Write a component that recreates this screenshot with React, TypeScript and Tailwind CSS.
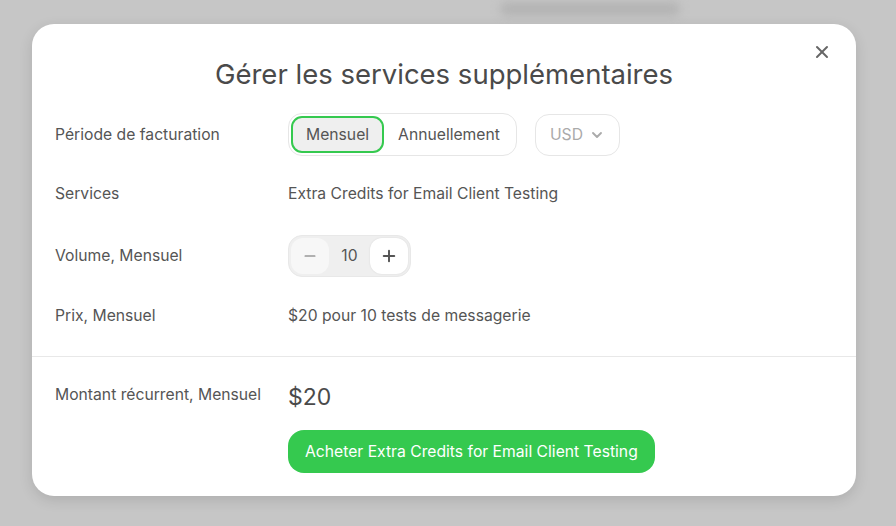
import React, { useState } from 'react';
import { X, ChevronDown, Minus, Plus } from 'lucide-react';

const Row: React.FC<{ label: string; children: React.ReactNode; className?: string }> = ({ label, children, className }) => (
  <div className={`flex items-center ${className ?? ''}`}>
    <div className="w-[233px] shrink-0 text-[15.7px] text-[#555]">{label}</div>
    <div className="flex items-center">{children}</div>
  </div>
);

export default function App() {
  const [period, setPeriod] = useState<'month' | 'year'>('month');
  const [volume, setVolume] = useState(10);

  return (
    <div className="relative h-[526px] w-[896px] overflow-hidden bg-[#c6c6c6]" style={{ fontFamily: 'Inter, "Noto Sans", sans-serif' }}>
      {/* blurred page behind the overlay */}
      <div className="absolute left-[500px] top-[2px] h-[14px] w-[180px] rounded-full bg-[#b4b4b4] blur-[4px]" />

      <div className="absolute left-[32px] top-[24px] h-[472px] w-[824px] rounded-[22px] bg-white shadow-[0_4px_14px_rgba(0,0,0,0.12)]">
        <button className="absolute right-[24px] top-[18px] text-[#666]">
          <X size={20} strokeWidth={2.4} />
        </button>

        <h2 className="pt-[33px] text-center text-[27.5px] leading-[34px] text-[#4a4a4a]">Gérer les services supplémentaires</h2>

        <div className="px-[23px] pt-[22px]">
          <Row label="Période de facturation">
            <div className="flex h-[43px] items-center rounded-[14px] border border-[#e6e6e6] p-[2px]">
              <button
                onClick={() => setPeriod('month')}
                className={`h-[37px] rounded-[11px] px-[13px] text-[15.7px] text-[#555] ${period === 'month' ? 'border-2 border-[#35c94f] bg-[#efefef]' : 'border-2 border-transparent'}`}
              >
                Mensuel
              </button>
              <button
                onClick={() => setPeriod('year')}
                className={`h-[37px] rounded-[11px] px-[12px] text-[15.7px] text-[#555] ${period === 'year' ? 'border-2 border-[#35c94f] bg-[#efefef]' : 'border-2 border-transparent'}`}
              >
                Annuellement
              </button>
            </div>
            <div className="ml-[18px] flex h-[42px] w-[85px] items-center justify-center gap-[6px] rounded-[14px] border border-[#e6e6e6] text-[15.7px] text-[#aaa]">
              USD <ChevronDown size={16} strokeWidth={2.8} className="text-[#aaa]" />
            </div>
          </Row>

          <Row label="Services" className="mt-[26px]">
            <span className="text-[15.7px] text-[#555]">Extra Credits for Email Client Testing</span>
          </Row>

          <Row label="Volume, Mensuel" className="mt-[29px]">
            <div className="flex h-[42px] w-[123px] items-center justify-between rounded-[14px] border border-[#e8e8e8] bg-[#efefef] p-[2px]">
              <button onClick={() => setVolume(Math.max(0, volume - 10))} className="flex h-[36px] w-[38px] items-center justify-center rounded-[12px] bg-[#f7f7f7] text-[#999]">
                <Minus size={16} strokeWidth={2.6} />
              </button>
              <span className="text-[15.7px] text-[#555]">{volume}</span>
              <button onClick={() => setVolume(volume + 10)} className="flex h-[36px] w-[38px] items-center justify-center rounded-[12px] bg-white text-[#555] shadow-[0_0_2px_rgba(0,0,0,0.1)]">
                <Plus size={18} strokeWidth={2.6} />
              </button>
            </div>
          </Row>

          <Row label="Prix, Mensuel" className="mt-[27px]">
            <span className="text-[15.7px] text-[#555]">$20 pour 10 tests de messagerie</span>
          </Row>
        </div>

        <div className="mt-[29px] h-px w-full bg-[#e8e8e8]" />

        <div className="px-[23px] pt-[24px]">
          <div className="flex items-start">
            <div className="w-[233px] shrink-0 pt-[2px] text-[15.7px] text-[#555]">Montant récurrent, Mensuel</div>
            <div className="flex flex-col items-start">
              <span className="mt-[2px] text-[23px] leading-[29px] text-[#4a4a4a]">$20</span>
              <button className="mt-[18px] h-[43px] rounded-[16px] bg-[#35c94f] px-[17px] text-[15.7px] text-white">
                Acheter Extra Credits for Email Client Testing
              </button>
            </div>
          </div>
        </div>
      </div>
    </div>
  );
}
